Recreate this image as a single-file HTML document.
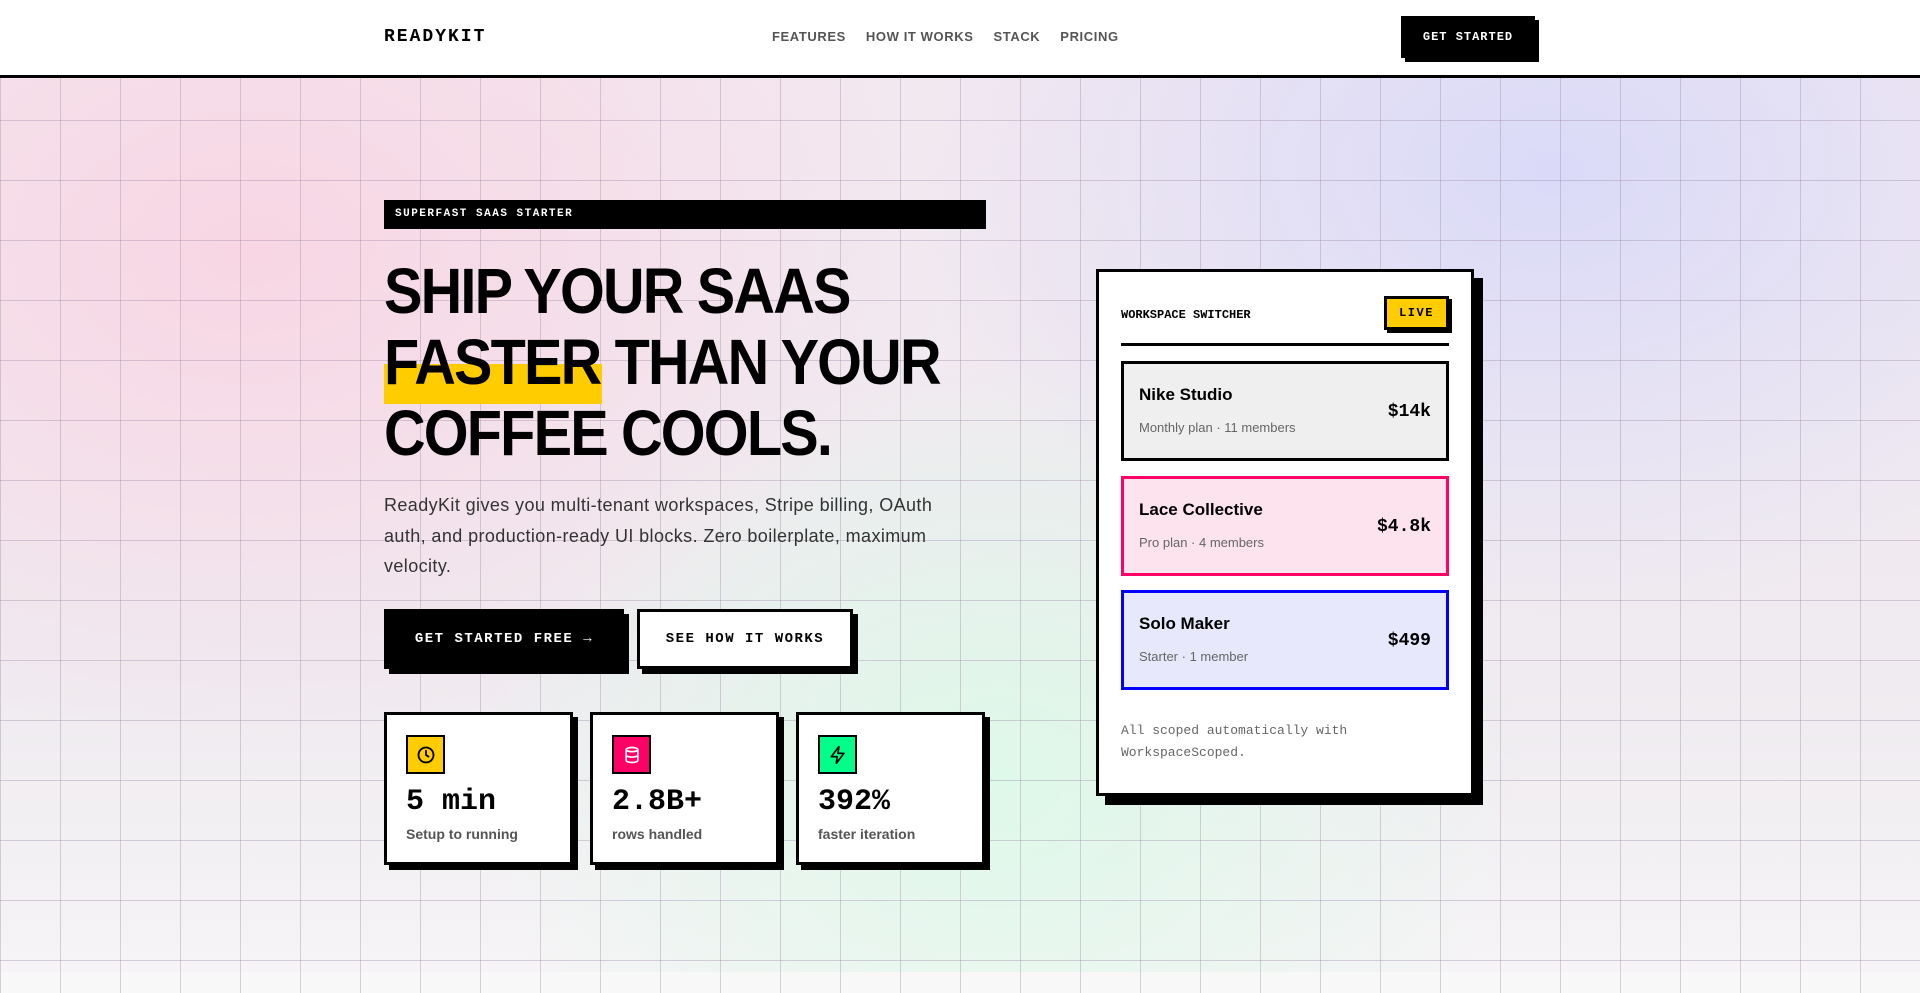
<!DOCTYPE html>
<html><head><meta charset="utf-8"><style>
*{margin:0;padding:0;box-sizing:border-box}
body{width:1920px;height:993px;overflow:hidden;position:relative;font-family:"Liberation Sans",sans-serif;background:#f8f8f8}
.bg{position:absolute;left:0;top:0;width:1920px;height:972px;
background:
radial-gradient(ellipse 520px 420px at 1000px 780px,rgba(220,250,232,0.9),rgba(220,250,232,0) 100%),
radial-gradient(ellipse 700px 500px at 250px 250px,rgba(248,214,228,1),rgba(248,214,228,0) 100%),
radial-gradient(ellipse 650px 450px at 1550px 170px,rgba(218,218,248,1),rgba(218,218,248,0) 100%),
linear-gradient(180deg,#f3e8f0 0%,#efebf0 70%,#f6f4f6 100%);}
.grid{position:absolute;left:0;top:0;width:1920px;height:993px;
background-image:linear-gradient(to right,rgba(150,130,160,.35) 1px,transparent 1px),linear-gradient(to bottom,rgba(150,130,160,.35) 1px,transparent 1px);
background-size:60px 60px;background-position:0 0,0 0}
nav{position:absolute;left:0;top:0;width:1920px;height:78px;background:#fff;border-bottom:3px solid #000}
.logo{position:absolute;left:384px;top:27px;font:bold 18px "Liberation Mono",monospace;letter-spacing:2px;color:#000}
.links{position:absolute;left:772px;top:29px;font-size:13px;font-weight:bold;color:#555;letter-spacing:.6px}
.links span{margin-right:20px}
.navbtn{position:absolute;left:1401px;top:16px;width:134px;height:42px;background:#000;color:#fff;font:bold 12px "Liberation Mono",monospace;letter-spacing:1px;text-align:center;line-height:42px;box-shadow:4px 4px 0 #000}
.badge{position:absolute;left:384px;top:200px;width:602px;height:29px;background:#000;color:#fff;font:bold 11px "Liberation Mono",monospace;letter-spacing:1.5px;line-height:29px;padding-left:11px}
h1{position:absolute;left:384px;top:256px;font-size:64px;line-height:71px;font-weight:bold;letter-spacing:-2px;color:#000;transform:scaleX(.9);transform-origin:0 0;white-space:nowrap}
.hl{position:absolute;left:384px;top:364px;width:218px;height:40px;background:#ffcc00}
p.lead{position:absolute;left:384px;top:490px;width:575px;font-size:18px;line-height:30.5px;color:#333;letter-spacing:.4px}
.btn{position:absolute;top:609px;height:60px;border:3px solid #000;box-shadow:5px 5px 0 #000;font:bold 14px "Liberation Mono",monospace;letter-spacing:1.5px;text-align:center;line-height:54px}
.stat{position:absolute;top:712px;width:189px;height:153px;background:#fff;border:3px solid #000;box-shadow:5px 5px 0 #000}
.ic{position:absolute;left:19px;top:20px;width:39px;height:39px;border:2px solid #000;display:flex;align-items:center;justify-content:center}
.num{position:absolute;left:19px;top:70px;font:bold 30px "Liberation Mono",monospace;color:#000}
.lab{position:absolute;left:19px;top:111px;font-size:14px;font-weight:bold;color:#555}
.panel{position:absolute;left:1096px;top:269px;width:378px;height:527px;background:#fff;border:3px solid #000;box-shadow:9px 9px 0 #000}
.ph{position:absolute;left:22px;top:36px;font:bold 12px "Liberation Mono",monospace;color:#000}
.live{position:absolute;left:285px;top:24px;width:65px;height:34px;background:#ffcc00;border:3px solid #000;box-shadow:3px 3px 0 #000;font:bold 12px "Liberation Mono",monospace;letter-spacing:1.5px;text-align:center;line-height:28px}
.div{position:absolute;left:22px;top:71px;width:328px;height:3px;background:#000}
.card{position:absolute;left:22px;width:328px;height:100px;border:3px solid #000}
.card .n{position:absolute;left:15px;top:21px;font-size:17px;font-weight:bold;color:#000}
.card .s{position:absolute;left:15px;top:56px;font-size:13px;color:#666}
.card .p{position:absolute;right:15px;top:38px;font:bold 18px "Liberation Mono",monospace;color:#000}
.foot{position:absolute;left:22px;top:448px;font:13px/22px "Liberation Mono",monospace;color:#666}
</style></head><body>
<div class="bg"></div><div class="grid"></div>
<nav>
<div class="logo">READYKIT</div>
<div class="links"><span>FEATURES</span><span>HOW IT WORKS</span><span>STACK</span><span>PRICING</span></div>
<div class="navbtn">GET STARTED</div>
</nav>
<div class="badge">SUPERFAST SAAS STARTER</div>
<div class="hl"></div>
<h1>SHIP YOUR SAAS<br>FASTER THAN YOUR<br>COFFEE COOLS.</h1>
<p class="lead">ReadyKit gives you multi-tenant workspaces, Stripe billing, OAuth auth, and production-ready UI blocks. Zero boilerplate, maximum velocity.</p>
<div class="btn" style="left:384px;width:240px;background:#000;color:#fff">GET STARTED FREE →</div>
<div class="btn" style="left:637px;width:216px;background:#fff;color:#000">SEE HOW IT WORKS</div>

<div class="stat" style="left:384px"><div class="ic" style="background:#ffcc00"><svg width="20" height="20" viewBox="0 0 24 24" fill="none" stroke="#000" stroke-width="2.2" stroke-linecap="round"><circle cx="12" cy="12" r="9"/><path d="M12 7v5l3 2"/></svg></div><div class="num">5 min</div><div class="lab">Setup to running</div></div>
<div class="stat" style="left:590px"><div class="ic" style="background:#ff0066"><svg width="20" height="20" viewBox="0 0 24 24" fill="none" stroke="#fff" stroke-width="2"><ellipse cx="12" cy="5.5" rx="7" ry="2.5"/><path d="M5 5.5v13c0 1.4 3.1 2.5 7 2.5s7-1.1 7-2.5v-13M5 12c0 1.4 3.1 2.5 7 2.5s7-1.1 7-2.5"/></svg></div><div class="num">2.8B+</div><div class="lab">rows handled</div></div>
<div class="stat" style="left:796px"><div class="ic" style="background:#00ff88"><svg width="20" height="20" viewBox="0 0 24 24" fill="none" stroke="#000" stroke-width="2" stroke-linejoin="round"><path d="M13 2L4 14h7l-1 8 9-12h-7z"/></svg></div><div class="num">392%</div><div class="lab">faster iteration</div></div>

<div class="panel">
<div class="ph">WORKSPACE SWITCHER</div>
<div class="live">LIVE</div>
<div class="div"></div>
<div class="card" style="top:89px;background:#efefef"><div class="n">Nike Studio</div><div class="s">Monthly plan · 11 members</div><div class="p">$14k</div></div>
<div class="card" style="top:204px;background:#fde3ee;border-color:#ff0066"><div class="n">Lace Collective</div><div class="s">Pro plan · 4 members</div><div class="p">$4.8k</div></div>
<div class="card" style="top:318px;background:#e8e8fd;border-color:#0000ff"><div class="n">Solo Maker</div><div class="s">Starter · 1 member</div><div class="p">$499</div></div>
<div class="foot">All scoped automatically with<br>WorkspaceScoped.</div>
</div>
</body></html>
